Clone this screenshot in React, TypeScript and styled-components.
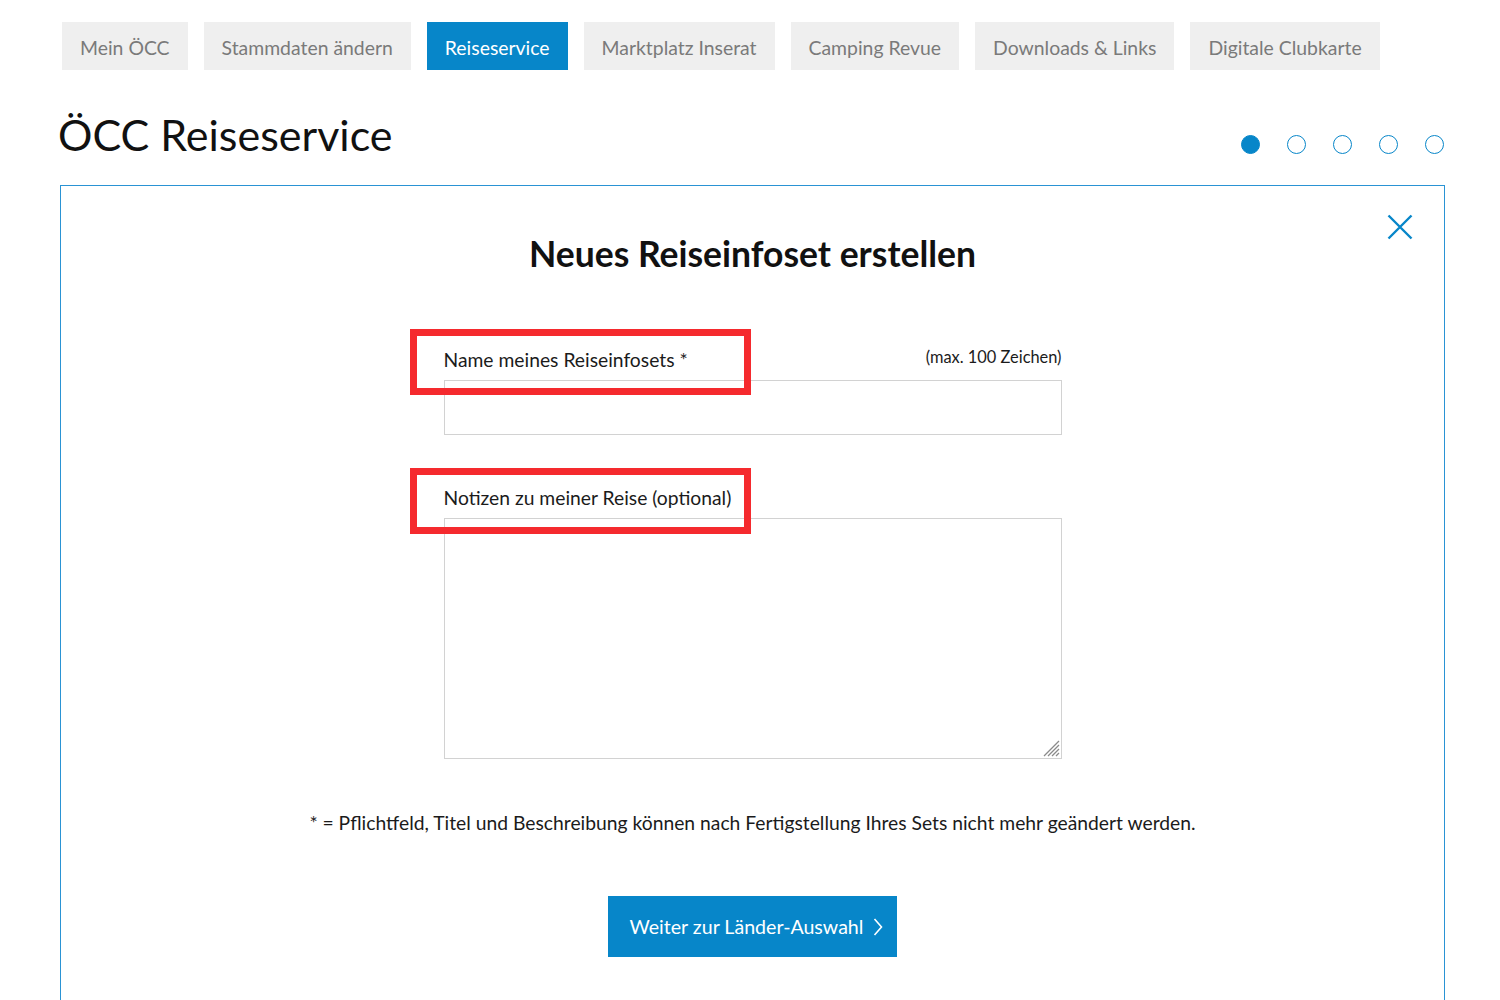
import React, { useState } from 'react';
import styled, { createGlobalStyle } from 'styled-components';

const BLUE = '#0786c9';

const GlobalStyle = createGlobalStyle`
  html, body {
    margin: 0;
    padding: 0;
    background: #ffffff;
    font-family: Lato, 'Noto Sans', 'Liberation Sans', sans-serif;
    color: #1b1b1b;
  }
`;

const tabs = [
  'Mein ÖCC',
  'Stammdaten ändern',
  'Reiseservice',
  'Marktplatz Inserat',
  'Camping Revue',
  'Downloads & Links',
  'Digitale Clubkarte',
];

function App() {
  const [activeTab, setActiveTab] = useState('Reiseservice');
  const [name, setName] = useState('');
  const [notes, setNotes] = useState('');

  return (
    <StyledPage>
      <GlobalStyle />
      <StyledTabBar>
        {tabs.map((tab) => (
          <StyledTab key={tab} $active={tab === activeTab} onClick={() => setActiveTab(tab)}>
            {tab}
          </StyledTab>
        ))}
      </StyledTabBar>

      <StyledHeader>
        <StyledPageTitle>ÖCC Reiseservice</StyledPageTitle>
        <StyledSteps>
          {[0, 1, 2, 3, 4].map((i) => (
            <StyledStepDot key={i} $filled={i === 0} />
          ))}
        </StyledSteps>
      </StyledHeader>

      <StyledPanel>
        <StyledCloseButton type="button" aria-label="Schließen">
          <svg width="26" height="26" viewBox="0 0 26 26">
            <path d="M1.5 1.5 L24.5 24.5 M24.5 1.5 L1.5 24.5" stroke={BLUE} strokeWidth="2.4" fill="none" />
          </svg>
        </StyledCloseButton>

        <StyledPanelTitle>Neues Reiseinfoset erstellen</StyledPanelTitle>

        <StyledForm onSubmit={(e) => e.preventDefault()}>
          <StyledLabelRow>
            <StyledHighlight />
            <StyledLabel htmlFor="setName">Name meines Reiseinfosets *</StyledLabel>
            <StyledHint>(max. 100 Zeichen)</StyledHint>
          </StyledLabelRow>
          <StyledInput id="setName" maxLength={100} value={name} onChange={(e) => setName(e.target.value)} />

          <StyledLabelRow $spaced>
            <StyledHighlight />
            <StyledLabel htmlFor="setNotes">Notizen zu meiner Reise (optional)</StyledLabel>
          </StyledLabelRow>
          <StyledTextareaWrap>
            <StyledTextarea id="setNotes" value={notes} onChange={(e) => setNotes(e.target.value)} />
            <StyledGrip width="18" height="18" viewBox="0 0 18 18">
              <path d="M17 2 L2 17 M17 6 L6 17 M17 10 L10 17 M17 14 L14 17" stroke="#8a8a8a" strokeWidth="1.3" />
            </StyledGrip>
          </StyledTextareaWrap>

          <StyledNote>
            * = Pflichtfeld, Titel und Beschreibung können nach Fertigstellung Ihres Sets nicht mehr geändert werden.
          </StyledNote>

          <StyledSubmit type="submit">
            Weiter zur Länder-Auswahl
            <svg width="10" height="18" viewBox="0 0 10 18">
              <path d="M1.5 1 L8.5 9 L1.5 17" stroke="#ffffff" strokeWidth="1.6" fill="none" />
            </svg>
          </StyledSubmit>
        </StyledForm>
      </StyledPanel>
    </StyledPage>
  );
}

const StyledPage = styled.div`
  width: 1385px;
  padding: 22px 0 0 60px;
  height: 978px;
  overflow: hidden;
`;

const StyledTabBar = styled.nav`
  display: flex;
  gap: 16px;
  padding-left: 2px;
`;

const StyledTab = styled.button<{ $active: boolean }>`
  height: 48px;
  padding: 3px 18px 0;
  border: none;
  font-family: inherit;
  font-size: 19.4px;
  line-height: 45px;
  color: ${({ $active }) => ($active ? '#ffffff' : '#7a7a7a')};
  background-color: ${({ $active }) => ($active ? BLUE : '#efefef')};
  cursor: pointer;
`;

const StyledHeader = styled.div`
  display: flex;
  justify-content: space-between;
  align-items: flex-end;
  padding-top: 39px;
  margin-bottom: 24px;
`;

const StyledPageTitle = styled.h1`
  margin: 0 0 0 -2px;
  font-size: 43px;
  font-weight: 400;
  line-height: 1.2;
  color: #111111;
`;

const StyledSteps = styled.div`
  display: flex;
  gap: 27px;
  margin-bottom: 7px;
  margin-right: 1px;
`;

const StyledStepDot = styled.span<{ $filled: boolean }>`
  width: 19px;
  height: 19px;
  box-sizing: border-box;
  border-radius: 50%;
  border: 1.6px solid ${BLUE};
  background-color: ${({ $filled }) => ($filled ? BLUE : 'transparent')};
`;

const StyledPanel = styled.section`
  position: relative;
  border: 1px solid #2a93d4;
  border-bottom: none;
  padding: 47px 0 60px;
  display: flex;
  flex-direction: column;
  align-items: center;
`;

const StyledCloseButton = styled.button`
  position: absolute;
  top: 28px;
  right: 31px;
  padding: 0;
  border: none;
  background: none;
  line-height: 0;
  cursor: pointer;
`;

const StyledPanelTitle = styled.h2`
  margin: 0;
  font-size: 35.5px;
  font-weight: 700;
  line-height: 1.2;
  color: #111111;
`;

const StyledForm = styled.form`
  width: 618px;
  margin-top: 72px;
  display: flex;
  flex-direction: column;
  align-items: stretch;
`;

const StyledLabelRow = styled.div<{ $spaced?: boolean }>`
  position: relative;
  display: flex;
  justify-content: space-between;
  align-items: flex-end;
  margin-top: ${({ $spaced }) => ($spaced ? '51px' : '0')};
  margin-bottom: 9px;
`;

const StyledHighlight = styled.span`
  position: absolute;
  z-index: 2;
  left: -34px;
  top: -18px;
  width: 341px;
  height: 66px;
  box-sizing: border-box;
  border: 7px solid #f52a2e;
  pointer-events: none;
`;

const StyledLabel = styled.label`
  font-size: 19.3px;
  line-height: 1.2;
  color: #1b1b1b;
`;

const StyledHint = styled.span`
  font-size: 16.4px;
  line-height: 1.2;
  color: #1b1b1b;
  margin-bottom: 4px;
`;

const StyledInput = styled.input`
  height: 55px;
  box-sizing: border-box;
  border: 1px solid #d2d2d2;
  padding: 0 12px;
  font-family: inherit;
  font-size: 18px;

  &:focus {
    outline: none;
  }
`;

const StyledTextareaWrap = styled.div`
  position: relative;
  display: flex;
`;

const StyledTextarea = styled.textarea`
  flex: 1;
  height: 241px;
  box-sizing: border-box;
  border: 1px solid #d2d2d2;
  padding: 10px 12px;
  font-family: inherit;
  font-size: 18px;
  resize: none;

  &:focus {
    outline: none;
  }
`;

const StyledGrip = styled.svg`
  position: absolute;
  right: 2px;
  bottom: 2px;
  pointer-events: none;
`;

const StyledNote = styled.p`
  margin: 52px -180px 0;
  font-size: 19.3px;
  line-height: 1.2;
  text-align: center;
  white-space: nowrap;
  color: #1b1b1b;
`;

const StyledSubmit = styled.button`
  align-self: center;
  margin-top: 62px;
  height: 61px;
  padding: 0 14px 0 22px;
  display: flex;
  align-items: center;
  gap: 10px;
  border: none;
  background-color: ${BLUE};
  color: #ffffff;
  font-family: inherit;
  font-size: 19.6px;
  cursor: pointer;
`;

export default App;
